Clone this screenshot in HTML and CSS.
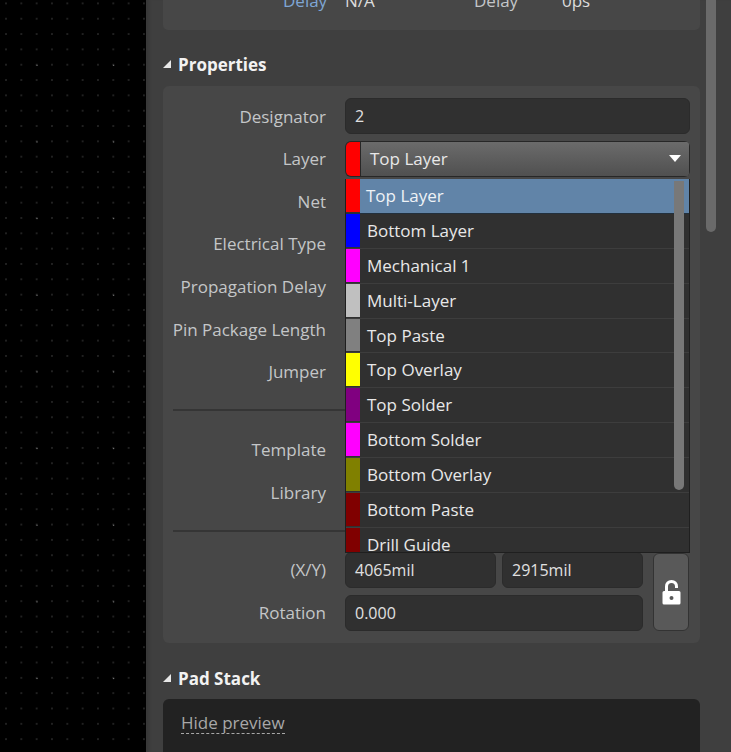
FILE: index.html
```html
<!DOCTYPE html>
<html lang="en">
<head>
<meta charset="utf-8">
<title>Properties</title>
<link rel="stylesheet" href="styles.css">
</head>
<body>
<div class="app">
  <div class="canvas"></div>
  <div class="panel">
    <div class="content">
      <div class="top-card">
        <span class="top-label">Delay</span><span class="top-value">N/A</span>
        <span class="top-label2">Delay</span><span class="top-value2">0ps</span>
      </div>
      <div class="section-head first">
        <svg class="caret" width="9" height="9" viewBox="0 0 9 9"><polygon points="8,0 8,8 0,8"/></svg>
        <span>Properties</span>
      </div>
      <div class="form">
        <div class="rows">
          <div class="row"><span class="label">Designator</span><div class="field">2</div></div>
          <div class="row"><span class="label">Layer</span>
            <div class="select">
              <i class="swatch-main"></i><span class="select-box">Top Layer<svg class="arrow" width="12" height="7" viewBox="0 0 12 7"><polygon points="0,0 12,0 6,7"/></svg></span>
            </div>
          </div>
          <div class="row"><span class="label">Net</span></div>
          <div class="row"><span class="label">Electrical Type</span></div>
          <div class="row"><span class="label">Propagation Delay</span></div>
          <div class="row"><span class="label">Pin Package Length</span></div>
          <div class="row"><span class="label">Jumper</span></div>
        </div>
        <div class="group">
          <div class="row"><span class="label">Template</span></div>
          <div class="row"><span class="label">Library</span></div>
        </div>
        <div class="coords">
          <div class="coord-rows">
            <div class="row"><span class="label">(X/Y)</span><div class="field half first-half">4065mil</div><div class="field half second-half">2915mil</div></div>
            <div class="row"><span class="label">Rotation</span><div class="field rotation">0.000</div></div>
          </div>
          <div class="lock">
            <svg width="19" height="25" viewBox="0 0 19 25"><path class="shackle" d="M4.5 12V6.5C4.5 3.5 6.5 1.5 9.5 1.5S14.5 3.5 14.5 6.5V8"/><path class="lock-body" fill-rule="evenodd" d="M2 11H17Q18.5 11 18.5 12.5V23Q18.5 24.500 17 24.500H2Q.5 24.500 .5 23V12.500Q.5 11 2 11ZM9.500 16A2 2 0 1 0 9.500 20A2 2 0 1 0 9.500 16Z"/></svg>
          </div>
        </div>
        <div class="menu">
          <div class="opt active"><i class="c-red"></i><span>Top Layer</span></div>
          <div class="opt"><i class="c-blue"></i><span>Bottom Layer</span></div>
          <div class="opt"><i class="c-magenta"></i><span>Mechanical 1</span></div>
          <div class="opt"><i class="c-silver"></i><span>Multi-Layer</span></div>
          <div class="opt"><i class="c-gray"></i><span>Top Paste</span></div>
          <div class="opt"><i class="c-yellow"></i><span>Top Overlay</span></div>
          <div class="opt"><i class="c-purple"></i><span>Top Solder</span></div>
          <div class="opt"><i class="c-magenta"></i><span>Bottom Solder</span></div>
          <div class="opt"><i class="c-olive"></i><span>Bottom Overlay</span></div>
          <div class="opt"><i class="c-maroon"></i><span>Bottom Paste</span></div>
          <div class="opt"><i class="c-maroon"></i><span>Drill Guide</span></div>
          <div class="menu-scroll"></div>
        </div>
      </div>
      <div class="section-head second">
        <svg class="caret" width="9" height="9" viewBox="0 0 9 9"><polygon points="8,0 8,8 0,8"/></svg>
        <span>Pad Stack</span>
      </div>
      <div class="stack-card"><span class="hide-link">Hide preview</span></div>
    </div>
    <div class="scroll-track"><div class="scroll-thumb"></div></div>
  </div>
</div>
</body>
</html>
```
FILE: styles.css
```css
* { box-sizing: border-box; }
html, body { margin: 0; height: 100%; overflow: hidden; background: #000; }
body { font-family: "Open Sans", "Noto Sans", sans-serif; font-size: 17px; color: #dcdcdc; }
.app { display: flex; width: 731px; height: 752px; overflow: hidden; }
.canvas {
  width: 146px; flex: none; background-color: #000;
  background-image:
    radial-gradient(circle, #8a8a8a 0, #8a8a8a .6px, transparent 1px),
    radial-gradient(circle, #333 0, #333 .5px, transparent 1px);
  background-size: 76.67px 76.67px, 15.33px 15.33px;
  background-position: -1.33px 27px, -1.67px -4.27px;
}
.panel { flex: 1; display: flex; background: #3f3f3f; box-shadow: inset 5px 0 3px -2px #383838; }
.content { width: 537px; margin-left: 17px; flex: none; display: flex; flex-direction: column; }
.top-card { position: relative; height: 30px; background: #474747; border-radius: 0 0 5px 5px; overflow: hidden; }
.top-label, .top-label2, .top-value, .top-value2 { position: absolute; top: -11px; line-height: 24px; }
.top-label { left: 120px; color: #7fa6d4; }
.top-label2 { left: 311px; color: #c4c6c8; }
.top-value { left: 182px; }
.top-value2 { left: 399px; }
.section-head { display: flex; align-items: center; gap: 6px; font-weight: 700; font-size: 17px; color: #f2f2f2; }
.section-head.first { height: 56px; padding-top: 12px; }
.section-head.second { height: 56px; padding-top: 14px; margin-bottom: 0; }
.caret { fill: #e8e8e8; flex: none; }
.form { position: relative; height: 557px; padding-top: 12px; background: #474747; border-radius: 6px; }
.rows { display: flex; flex-direction: column; gap: 6.67px; }
.row { display: flex; align-items: center; height: 36px; }
.label { width: 163px; margin-right: 19px; flex: none; text-align: right; color: #c4c6c8; white-space: nowrap; }
.field { height: 36px; width: 345px; padding-left: 9px; line-height: 34px; background: #303030; border: 1px solid #2b2b2b; border-radius: 6px; color: #e0e0e0; font-size: 16px; }
.select { display: flex; width: 345px; height: 36px; background: #272727; border-radius: 6px; overflow: hidden; padding: 1px; }
.swatch-main { width: 14px; flex: none; background: #f00; border-radius: 5px 0 0 5px; }
.select-box { flex: 1; margin-left: 1px; display: flex; align-items: center; justify-content: space-between; padding: 0 8px 0 9px; background: linear-gradient(#6b6b6b, #505050); color: #e8e8e8; }
.arrow { fill: #fff; }
.group { display: flex; flex-direction: column; gap: 7px; margin: 19px 20px 20px 10px; padding: 21px 0 19px; border-top: 2px solid #353535; border-bottom: 2px solid #353535; }
.group .label { width: 153px; }
.coords { display: flex; gap: 10px; }
.coord-rows { display: flex; flex-direction: column; gap: 7px; }
.half { width: 151px; }
.second-half { width: 141px; margin-left: 6px; }
.rotation { width: 298px; }
.lock { width: 36px; height: 78px; margin-top: 1px; display: flex; align-items: center; justify-content: center; background: #595959; border: 1px solid #333; border-radius: 6px; }
.lock svg { margin-top: 2px; }
.shackle { fill: none; stroke: #fff; stroke-width: 3; }
.lock-body { fill: #fff; }
.menu { position: absolute; left: 182px; top: 93px; width: 345px; height: 374px; background: #222; border: 1px solid #1f1f1f; border-top: 0; overflow: hidden; }
.opt { display: flex; height: 34.9px; border-bottom: 1px solid #3d3d3d; background: #303030; }
.opt i { width: 14px; flex: none; margin-bottom: 1px; }
.opt span { flex: 1; padding-left: 7px; line-height: 33px; color: #e8e8e8; }
.opt.active { border-bottom-color: #22303d; }
.opt.active span { background: #6184a8; padding-left: 6px; color: #eef2f6; }
.c-red { background: #f00; }
.c-blue { background: #00f; }
.c-magenta { background: #f0f; }
.c-silver { background: #c0c0c0; }
.c-gray { background: #808080; }
.c-yellow { background: #ff0; }
.c-purple { background: #800080; }
.c-olive { background: #808000; }
.c-maroon { background: #800000; }
.menu-scroll { position: absolute; left: 328px; top: 2px; width: 10px; height: 309px; background: #787878; border-radius: 0 0 5px 5px; }
.stack-card { flex: 1; background: #222; border-radius: 6px 6px 0 0; padding: 12px 0 0 18px; }
.hide-link { color: #a8a8a8; border-bottom: 1px dashed #a8a8a8; line-height: 21px; display: inline-block; }
.scroll-track { flex: none; width: 10px; margin-left: 6px; }
.scroll-thumb { height: 232px; background: #6a6a6a; border-radius: 0 0 5px 5px; }
```
